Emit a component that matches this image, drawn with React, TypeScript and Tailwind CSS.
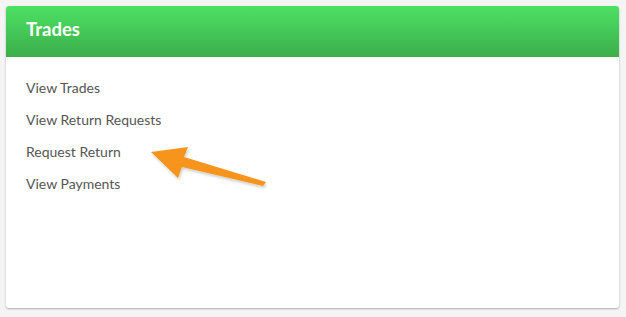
import { ReactNode } from "react";

const LINKS = ["View Trades", "View Return Requests", "Request Return", "View Payments"];

function Panel({ title, children }: { title: string; children: ReactNode }) {
  return (
    <div className="flex h-[302px] w-[613px] flex-col overflow-hidden rounded-[3px] bg-white shadow-[0_1px_2px_rgba(0,0,0,0.3)]">
      <div className="flex h-[51px] items-center bg-gradient-to-b from-[#4ce264] to-[#3cae4b] px-5 pb-[3px]">
        <h3 className="text-[18.5px] font-bold text-white">{title}</h3>
      </div>
      <div className="relative flex-1">{children}</div>
    </div>
  );
}

export default function App() {
  return (
    <div className="h-[317px] w-[626px] bg-[#f4f4f4] p-[6px]" style={{ fontFamily: "Lato, 'Open Sans', sans-serif" }}>
      <Panel title="Trades">
        <ul className="flex flex-col gap-[11px] px-5 pt-[20px]">
          {LINKS.map((l) => (
            <li key={l} className="text-[14px] leading-[21px]">
              <a href="#" className="text-[#555]">
                {l}
              </a>
            </li>
          ))}
        </ul>
        {/* annotation arrow */}
        <svg className="absolute left-0 top-0" width="613" height="251" viewBox="6 57 613 251">
          <defs>
            <filter id="sh" x="-20%" y="-20%" width="140%" height="140%">
              <feDropShadow dx="1" dy="2" stdDeviation="1.5" floodColor="#000" floodOpacity="0.2" />
            </filter>
          </defs>
          <polygon
            points="151,152 188,147 184,157 266,182 263,186 182,167 178,178"
            fill="#f7941d"
            filter="url(#sh)"
          />
        </svg>
      </Panel>
    </div>
  );
}
